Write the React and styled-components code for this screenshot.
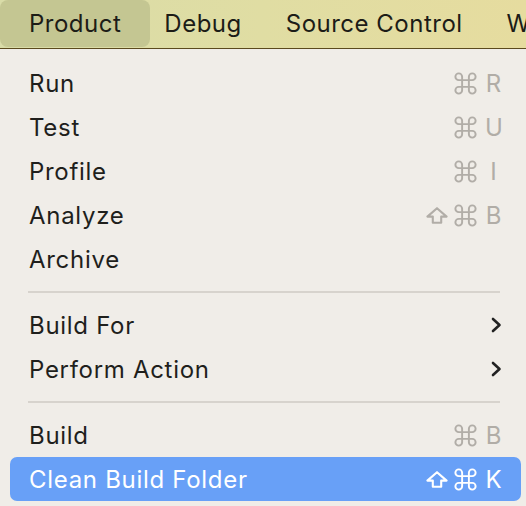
import React from 'react';
import styled, { createGlobalStyle } from 'styled-components';
import { Command } from 'lucide-react';

const GlobalStyle = createGlobalStyle`
    html, body {
        margin: 0;
        padding: 0;
        background: #f0ede8;
        overflow: hidden;
    }
    body {
        font-family: Inter, "Noto Sans", "DejaVu Sans", sans-serif;
        -webkit-font-smoothing: antialiased;
    }
`;

const groups = [
    [
        { label: 'Run', key: 'R' },
        { label: 'Test', key: 'U' },
        { label: 'Profile', key: 'I' },
        { label: 'Analyze', shift: true, key: 'B' },
        { label: 'Archive' },
    ],
    [
        { label: 'Build For', submenu: true },
        { label: 'Perform Action', submenu: true },
    ],
    [
        { label: 'Build', key: 'B' },
        { label: 'Clean Build Folder', shift: true, key: 'K', active: true },
    ],
];

function Chevron() {
    return (
        <Glyph width="12" height="16" viewBox="0 0 12 16">
            <path
                d="M3 2 L9.5 8 L3 14"
                fill="none"
                stroke="#222"
                strokeWidth="2.6"
                strokeLinecap="round"
                strokeLinejoin="round"
            />
        </Glyph>
    );
}

function ShiftIcon() {
    return (
        <Glyph width="22" height="17" viewBox="0 0 22 17">
            <path
                d="M6.8 15.8 V9.6 H1.4 L11 1.2 L20.6 9.6 H15.2 V15.8 Z"
                fill="none"
                stroke="currentColor"
                strokeWidth="2.1"
                strokeLinejoin="round"
            />
        </Glyph>
    );
}

function App() {
    return (
        <>
            <GlobalStyle />
            <MenuBar>
                <BarItem $open>Product</BarItem>
                <BarItem>Debug</BarItem>
                <BarItem>Source Control</BarItem>
                <BarItem>Window</BarItem>
            </MenuBar>
            <Menu>
                {groups.map((group, gi) => (
                    <React.Fragment key={gi}>
                        {gi > 0 && <Separator />}
                        {group.map((item) => (
                            <Row key={item.label} $active={item.active}>
                                <Label>{item.label}</Label>
                                {item.key && (
                                    <Shortcut $active={item.active}>
                                        {item.shift && <ShiftIcon />}
                                        <Command size={27} strokeWidth={1.7} style={{ flexShrink: 0 }} />
                                        <Key>{item.key}</Key>
                                    </Shortcut>
                                )}
                                {item.submenu && <Chevron />}
                            </Row>
                        ))}
                    </React.Fragment>
                ))}
            </Menu>
        </>
    );
}

export default App;

const MenuBar = styled.div`
    display: flex;
    align-items: flex-start;
    height: 48px;
    background: linear-gradient(90deg, #d9dca8 0%, #e0dda3 50%, #e6dc9f 100%);
    border-bottom: 1px solid #5b4a1e;
    white-space: nowrap;
    overflow: hidden;
`;

const BarItem = styled.div`
    display: flex;
    align-items: center;
    flex-shrink: 0;
    height: 47px;
    padding: 0 22px;
    font-size: 24px;
    letter-spacing: 0.5px;
    color: #1c1c17;
    border-radius: 8px;
    background: ${(p) => (p.$open ? '#c4c692' : 'transparent')};
    &:first-child {
        padding: 0 29px;
        margin-right: -8px;
    }
`;

const Menu = styled.div`
    padding: 12px 0 8px 0;
    background: #f0ede8;
    border-top-left-radius: 10px;
`;

const Row = styled.div`
    display: flex;
    align-items: center;
    justify-content: space-between;
    height: 44px;
    margin: 0 5px 0 10px;
    padding: 0 19px;
    border-radius: 7px;
    font-size: 24px;
    color: ${(p) => (p.$active ? '#ffffff' : '#1f1f1c')};
    background: ${(p) => (p.$active ? '#68a0f7' : 'transparent')};
`;

const Label = styled.span`
    letter-spacing: 0.7px;
`;

const Glyph = styled.svg`
    flex-shrink: 0;
`;

const Shortcut = styled.span`
    display: flex;
    align-items: center;
    gap: 4px;
    color: ${(p) => (p.$active ? '#ffffff' : '#b1ada7')};
`;

const Key = styled.span`
    display: inline-block;
    width: 17px;
    margin-left: 2px;
    text-align: center;
    font-size: 24px;
`;

const Separator = styled.div`
    height: 2px;
    margin: 10px 26px 10px 28px;
    background: #d7d3cd;
`;
